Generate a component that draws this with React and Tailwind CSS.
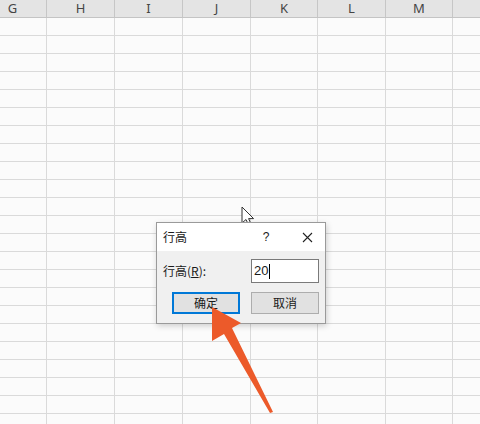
import React from 'react';

const columns = [
  { label: 'G', w: 'w-[68px]' },
  { label: 'H', w: 'w-[68px]' },
  { label: 'I', w: 'w-[68px]' },
  { label: 'J', w: 'w-[68px]' },
  { label: 'K', w: 'w-[67px]' },
  { label: 'L', w: 'w-[68px]' },
  { label: 'M', w: 'w-[67px]' },
  { label: '', w: 'w-[68px]' },
];

const rows = Array.from({ length: 23 });

const Cursor = () => (
  <svg className="absolute left-[241px] top-[206px]" width="14" height="21" viewBox="0 0 14 21">
    <path d="M1 1 L1 17 L5 13.5 L8 20 L10.5 19 L7.6 12.6 L12.6 12.6 Z" fill="#fff" stroke="#333" strokeWidth="1" strokeLinejoin="round" />
  </svg>
);

const Arrow = () => (
  <svg className="absolute left-0 top-0 pointer-events-none" width="480" height="424" viewBox="0 0 480 424">
    <polygon
      points="212,307 241,323 232,328 273,412 270,413 224,334 212,341"
      fill="#ec5a2a"
    />
  </svg>
);

const Dialog = () => (
  <div className="absolute left-[156px] top-[222px] w-[170px] h-[102px] bg-[#f0f0f0] border border-[#9a9a9a] shadow-[1px_2px_6px_rgba(0,0,0,0.18)] flex flex-col text-[12px] text-[#1a1a1a]" style={{ fontFamily: '"Noto Sans CJK SC", "Noto Sans", sans-serif' }}>
    <div className="h-[28px] bg-white flex items-center pl-[6px] pr-[12px]">
      <span className="flex-1">行高</span>
      <span className="w-[12px] text-center mr-[30px] text-[12px]" style={{ fontFamily: '"Liberation Sans", sans-serif' }}>?</span>
      <svg width="11" height="11" viewBox="0 0 11 11">
        <path d="M1 1 L10 10 M10 1 L1 10" stroke="#222" strokeWidth="1.1" />
      </svg>
    </div>
    <div className="flex items-center justify-between pl-[6px] pr-[6px] pt-[8px]">
      <span>
        行高(<span className="underline">R</span>):
      </span>
      <div className="w-[68px] h-[24px] bg-white border border-[#7a7a7a] flex items-center pl-[2px] text-[13px]" style={{ fontFamily: '"Liberation Sans", sans-serif' }}>
        <span>20</span>
        <span className="w-px h-[15px] bg-black ml-px" />
      </div>
    </div>
    <div className="flex gap-[11px] pl-[15px] pt-[9px]">
      <button className="w-[68px] h-[22px] bg-[#e1e1e1] border-2 border-[#0078d7] flex items-center justify-center text-[12px]">确定</button>
      <button className="w-[68px] h-[22px] bg-[#e1e1e1] border border-[#adadad] flex items-center justify-center text-[12px]">取消</button>
    </div>
  </div>
);

export default function App() {
  return (
    <div className="relative w-[480px] h-[424px] overflow-hidden bg-[#fbfbfb]" style={{ fontFamily: '"Noto Sans", "Liberation Sans", sans-serif' }}>
      <div className="flex -ml-[21px] h-[18px] bg-[#e4e4e4] border-b border-[#c4c4c4]">
        {columns.map((c, i) => (
          <div key={i} className={`${c.w} shrink-0 border-r border-[#c6c6c6] flex items-center justify-center text-[13px] text-[#444]`}>
            {c.label}
          </div>
        ))}
      </div>
      {rows.map((_, i) => (
        <div key={i} className="flex -ml-[21px] h-[18px] border-b border-[#dadada]">
          {columns.map((c, j) => (
            <div key={j} className={`${c.w} shrink-0 border-r border-[#dadada]`} />
          ))}
        </div>
      ))}
      <Cursor />
      <Dialog />
      <Arrow />
    </div>
  );
}
